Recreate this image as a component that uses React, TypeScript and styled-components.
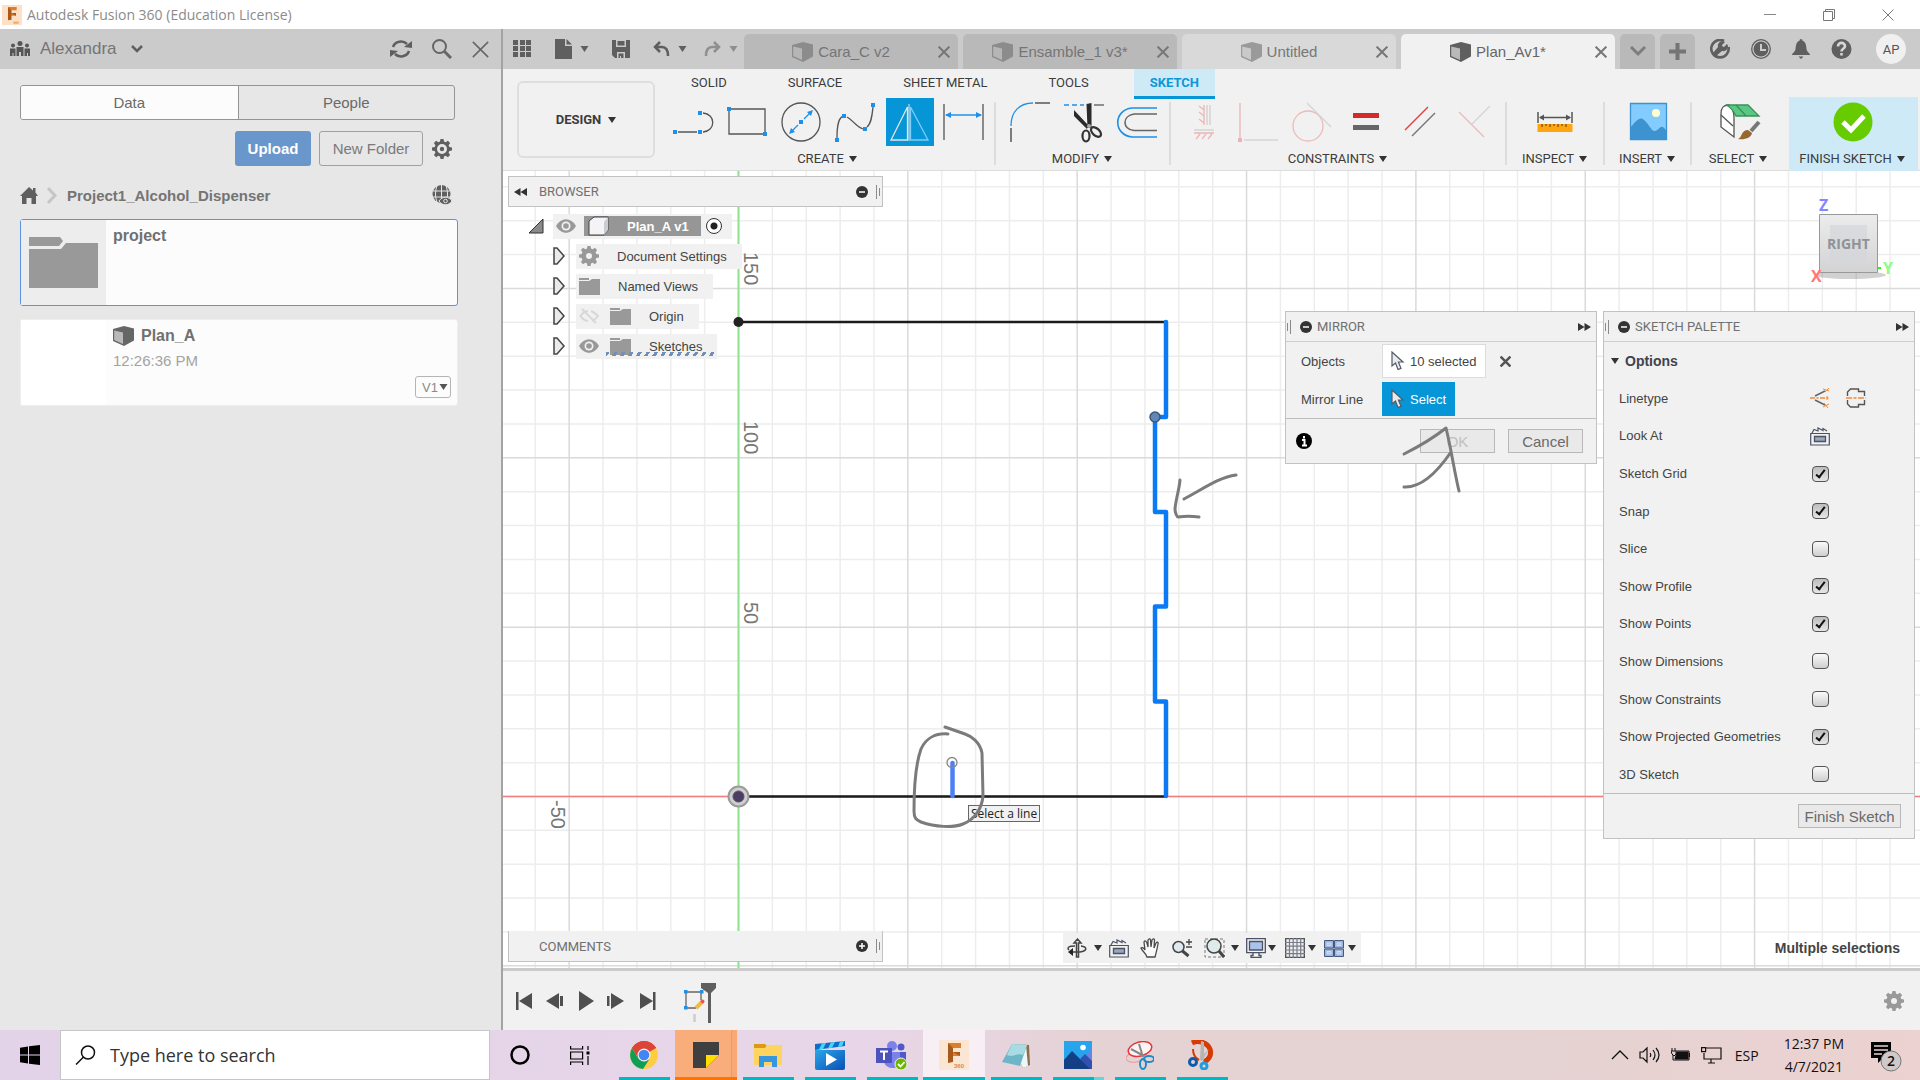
import React from "react";
import styled, { createGlobalStyle, css } from "styled-components";

const ui = `"Liberation Sans", Arial, sans-serif`;
const caps = `Roboto, "Liberation Sans", sans-serif`;
const sys = `"Open Sans", "Noto Sans", sans-serif`;

const Global = createGlobalStyle`
  *, *::before, *::after { box-sizing: border-box; }
  body { margin: 0; background: #fff; }
  button, input, select { font: inherit; color: inherit; }
  button { border: 0; background: none; padding: 0; cursor: pointer; }
  svg { display: block; flex: none; }
`;

/* ---------- frame ---------- */

const Screen = styled.div`
  display: flex;
  flex-direction: column;
  height: 100vh;
  overflow: hidden;
  font-family: ${ui};
  color: #4a4a4a;
`;
const TitleBar = styled.header`
  flex: none;
  height: 29px;
  display: flex;
  align-items: center;
  gap: 5px;
  padding: 0 3px 0 2px;
  font: 14px/20px ${sys};
  color: #8b8b8b;
`;
const WindowButtons = styled.div`
  margin-left: auto;
  display: flex;
  button { width: 59px; height: 29px; display: grid; place-items: center; }
`;
const Body = styled.div`
  flex: 1;
  min-height: 0;
  display: flex;
`;

/* ---------- data panel ---------- */

const DataPanel = styled.aside`
  flex: none;
  width: 503px;
  background: #e7e7e7;
  border-right: 2px solid #a3a3a3;
  color: #6a6a6a;
  font-size: 15px;
`;
const PanelTop = styled.div`
  height: 40px;
  background: #cbcbcb;
  display: flex;
  align-items: center;
  padding: 0 12px 0 10px;
  gap: 20px;
`;
const TeamButton = styled.button`
  display: flex;
  align-items: center;
  gap: 10px;
  margin-right: auto;
  font-size: 17px;
  color: #757575;
  span { margin-right: 4px; }
`;
const PanelContent = styled.div`
  padding: 16px 43px 0 20px;
`;
const Segments = styled.div`
  display: grid;
  grid-template-columns: 1fr 1fr;
  border: 1px solid #949494;
  border-radius: 3px;
  margin-right: 3px;
  overflow: hidden;
`;
const Segment = styled.button<{ $on?: boolean }>`
  height: 33px;
  background: ${(p) => (p.$on ? "#fcfcfc" : "transparent")};
  & + & { border-left: 1px solid #949494; }
`;
const Actions = styled.div`
  display: flex;
  justify-content: flex-end;
  align-items: center;
  gap: 8px;
  margin: 11px 6px 0 0;
`;
const UploadButton = styled.button`
  width: 76px;
  height: 35px;
  border-radius: 3px;
  background: #6996cb;
  color: #fff;
  font-weight: 700;
`;
const FolderButton = styled.button`
  width: 104px;
  height: 35px;
  margin-right: 1px;
  border: 1px solid #a0a0a0;
  border-radius: 3px;
  color: #7a7a7a;
`;
const Crumbs = styled.nav`
  display: flex;
  align-items: center;
  gap: 9px;
  height: 48px;
  margin-top: 5px;
  padding-right: 6px;
  a { color: #747474; font-weight: 700; text-decoration: none; }
  button { margin-left: auto; }
`;
const Card = styled.article<{ $selected?: boolean }>`
  display: flex;
  height: 87px;
  margin-bottom: 13px;
  background: #fcfcfc;
  border: 1px solid ${(p) => (p.$selected ? "#5b93dc" : "#eee")};
  border-radius: 3px;
`;
const Thumb = styled.div<{ $folder?: boolean }>`
  width: 85px;
  display: grid;
  place-items: center;
  background: ${(p) => (p.$folder ? "#ededed" : "#fff")};
`;
const CardText = styled.div`
  flex: 1;
  display: flex;
  flex-direction: column;
  padding: 6px 6px 0 7px;
  h3 {
    margin: 0;
    display: flex;
    align-items: center;
    gap: 7px;
    font-size: 16px;
    line-height: 20px;
    color: #707070;
  }
  time { line-height: 30px; color: #a3a3a3; }
`;
const Version = styled.label`
  align-self: flex-end;
  display: grid;
  width: 36px;
  height: 22px;
  align-items: center;
  border: 1px solid #b5b5b5;
  border-radius: 3px;
  font-size: 13px;
  color: #8a8a8a;
  > * { grid-area: 1 / 1; }
  select { appearance: none; border: 0; background: none; padding: 0 0 0 6px; width: 100%; }
  svg { justify-self: end; margin-right: 2px; }
`;

/* ---------- document tabs ---------- */

const Workspace = styled.main`
  flex: 1;
  min-width: 0;
  display: flex;
  flex-direction: column;
`;
const DocBar = styled.div`
  flex: none;
  height: 40px;
  display: flex;
  align-items: flex-end;
  background: #cbcbcb;
`;
const QuickTools = styled.div`
  flex: none;
  width: 241px;
  height: 40px;
  display: flex;
  align-items: center;
  gap: 23px;
  padding-left: 10px;
  button { display: flex; align-items: center; gap: 8px; }
  button:last-child { margin-left: -6px; }
`;
const Tabs = styled.div`
  flex: 1;
  display: flex;
  gap: 5px;
`;
const Tab = styled.div<{ $tone: string; $ink: string }>`
  flex: 0 1 214px;
  height: 35px;
  display: flex;
  align-items: center;
  padding-right: 8px;
  background: ${(p) => p.$tone};
  color: ${(p) => p.$ink};
  border-radius: 5px 5px 0 0;
  font-size: 15px;
  > button:first-child {
    flex: 1;
    display: flex;
    align-items: center;
    justify-content: center;
    gap: 5px;
  }
`;
const TabTool = styled.button`
  width: 35px;
  height: 35px;
  border-radius: 5px 5px 0 0;
  background: #b9b9b9;
  display: grid;
  place-items: center;
`;
const Account = styled.div`
  flex: none;
  height: 40px;
  display: flex;
  align-items: center;
  gap: 21px;
  padding-right: 14px;
`;
const Avatar = styled.button`
  width: 30px;
  height: 30px;
  margin-left: 3px;
  border-radius: 50%;
  background: #f0f0f0;
  font: 13px ${caps};
  color: #555;
`;

/* ---------- ribbon ---------- */

const Ribbon = styled.div`
  flex: none;
  display: flex;
  height: 102px;
  padding-right: 2px;
  background: #f1f1f1;
  border-bottom: 1px solid #dcdcdc;
  font-family: ${caps};
  font-size: 13px;
  color: #3c3c3c;
`;
const DesignButton = styled.button`
  flex: none;
  width: 138px;
  height: 77px;
  margin: 12px 12px 0 14px;
  border: 2px solid #dedede;
  border-radius: 6px;
  display: flex;
  align-items: center;
  justify-content: center;
  gap: 7px;
  font-weight: 700;
`;
const RibbonMain = styled.div`
  flex: 1;
  display: flex;
  flex-direction: column;
`;
const RibbonTabs = styled.div`
  height: 28px;
  display: flex;
  gap: 29px;
  padding-left: 8px;
`;
const RibbonTab = styled.button<{ $on?: boolean }>`
  height: 30px;
  padding: 0 16px 3px;
  ${(p) =>
    p.$on &&
    css`
      background: #cdeaf6;
      border-bottom: 3px solid #0696d7;
      padding-bottom: 0;
      color: #0e97d8;
      font-weight: 700;
    `}
`;
const Groups = styled.div`
  flex: 1;
  display: flex;
`;
const Group = styled.section<{ $w: number; $pad?: number; $finish?: boolean; $last?: boolean }>`
  position: relative;
  flex: none;
  width: ${(p) => p.$w}px;
  padding: 1px ${(p) => p.$pad || 0}px 0 0;
  display: flex;
  flex-direction: column;
  align-items: center;
  background: ${(p) => (p.$finish ? "#cdeaf6" : "none")};
  margin-left: ${(p) => (p.$finish ? "auto" : "0")};
  &::after {
    content: "";
    position: absolute;
    right: 0;
    top: 5px;
    height: 63px;
    width: ${(p) => (p.$last ? "0" : "2px")};
    background: #dcdcdc;
  }
`;
const Tools = styled.div`
  display: flex;
  gap: 6px;
`;
const Tool = styled.button<{ $on?: boolean }>`
  width: 48px;
  height: 48px;
  background: ${(p) => (p.$on ? "#0696d7" : "none")};
`;
const GroupLabel = styled.button`
  height: 25px;
  display: flex;
  align-items: center;
  gap: 5px;
  padding-right: 3px;
  white-space: nowrap;
`;

/* ---------- canvas ---------- */

const Canvas = styled.div`
  position: relative;
  flex: 1;
  min-height: 0;
  overflow: hidden;
  background: #fff;
  font-size: 13px;
`;
const Layer = styled.svg`
  position: absolute;
  inset: 0;
  width: 100%;
  height: 100%;
  pointer-events: none;
`;
const PanelBar = styled.div<{ $bottom?: boolean }>`
  position: absolute;
  left: 5px;
  width: 375px;
  height: 31px;
  display: flex;
  align-items: center;
  padding: 0 2px 0 5px;
  background: #f1f1f1;
  border: 1px solid #c2c2c2;
  ${(p) => (p.$bottom ? "bottom: 6px; border-top: 0;" : "top: 5px;")}
  font: 13px ${caps};
  color: #707070;
  h2 { margin: 0 auto 0 0; font: inherit; }
  button { margin-right: 8px; }
`;
const Collapse = styled.span`
  width: 25px;
`;
const Tree = styled.ul`
  position: absolute;
  left: 26px;
  top: 40px;
  margin: 0;
  padding: 0;
  list-style: none;
  li { display: flex; align-items: center; height: 30px; }
`;
const Twisty = styled.button<{ $root?: boolean }>`
  width: ${(p) => (p.$root ? "24px" : "23px")};
  margin-left: ${(p) => (p.$root ? "0" : "24px")};
`;
const NodeBox = styled.div<{ $root?: boolean }>`
  position: relative;
  height: 25px;
  display: flex;
  align-items: center;
  gap: 11px;
  padding: 0 ${(p) => (p.$root ? "10px" : "15px")} 0 3px;
  background: #f1f1f1;
`;
const NodeName = styled.span`
  padding-left: 7px;
  color: #444;
`;
const RootName = styled.div`
  display: flex;
  align-items: center;
  gap: 18px;
  height: 20px;
  margin: 0 -6px 0 -3px;
  padding: 0 12px 0 4px;
  background: #969696;
  color: #fff;
  font-weight: 700;
`;
const ActiveRadio = styled.input`
  appearance: none;
  width: 16px;
  height: 16px;
  margin: 0;
  border: 1px solid #333;
  border-radius: 50%;
  background: radial-gradient(circle, #222 0 3px, #fff 4px);
`;
const Hatch = styled.i`
  position: absolute;
  left: 30px;
  right: 2px;
  bottom: 3px;
  height: 4px;
  background: repeating-linear-gradient(120deg, #6f8fb8 0 3px, transparent 3px 7px);
`;
const Dialog = styled.section<{ $right: number }>`
  position: absolute;
  top: 140px;
  right: ${(p) => p.$right}px;
  width: 312px;
  background: #f1f1f1;
  border: 1px solid #c2c2c2;
  color: #444;
`;
const DialogHead = styled.header`
  height: 30px;
  display: flex;
  align-items: center;
  gap: 5px;
  padding: 0 5px 0 1px;
  border-bottom: 1px solid #cfcfcf;
  font: 13px ${caps};
  color: #707070;
  h2 { margin: 0 auto 0 0; font: inherit; }
  button:first-of-type { margin-left: 4px; }
`;
const Inputs = styled.div`
  display: grid;
  grid-template-columns: 81px auto 40px;
  justify-content: start;
  align-items: center;
  row-gap: 4px;
  padding: 2px 0 2px 15px;
`;
const Picker = styled.button<{ $on?: boolean }>`
  justify-self: start;
  height: 34px;
  display: flex;
  align-items: center;
  gap: 5px;
  padding: 0 8px;
  border: 1px solid ${(p) => (p.$on ? "#0696d7" : "#dcdcdc")};
  background: ${(p) => (p.$on ? "#0696d7" : "#fff")};
  color: ${(p) => (p.$on ? "#fff" : "#444")};
`;
const Clear = styled.button`
  justify-self: center;
`;
const DialogFoot = styled.footer`
  height: 45px;
  display: flex;
  align-items: center;
  justify-content: flex-end;
  gap: 13px;
  padding: 0 13px 0 10px;
  border-top: 1px solid #bdbdbd;
  > svg { margin-right: auto; }
`;
const FlatButton = styled.button<{ $w: number }>`
  width: ${(p) => p.$w}px;
  height: 24px;
  border: 1px solid #b8b8b8;
  background: #e9e9e9;
  font-size: 15px;
  color: #6a6a6a;
  &:disabled { color: #c0c0c0; }
`;
const Options = styled.div`
  display: grid;
  grid-auto-rows: 1fr;
  height: 451px;
`;
const OptionsHead = styled.button`
  display: flex;
  align-items: center;
  gap: 5px;
  padding-left: 6px;
  font-size: 14px;
  font-weight: 700;
  color: #3f434d;
`;
const OptionRow = styled.label`
  display: grid;
  grid-template-columns: 175px auto auto;
  justify-content: start;
  align-items: center;
  column-gap: 16px;
  padding-left: 15px;
  span { white-space: nowrap; }
`;
const Check = styled.input`
  appearance: none;
  position: relative;
  width: 17px;
  height: 16px;
  margin: 0 0 0 2px;
  border: 1px solid #555;
  border-radius: 4px;
  background: linear-gradient(#fafafa, #cfcfcf);
  &:checked { background: linear-gradient(#bdbdbd, #e6e6e6); }
  &:checked::after {
    content: "";
    position: absolute;
    left: 5px;
    top: 1px;
    width: 5px;
    height: 10px;
    border: solid #111;
    border-width: 0 2px 2px 0;
    transform: rotate(38deg);
  }
`;
const ViewNav = styled.div`
  position: absolute;
  left: 50%;
  bottom: 5px;
  transform: translateX(-50%);
  height: 30px;
  display: flex;
  align-items: center;
  padding: 0 5px 0 4px;
  background: #f1f1f1;
`;
const NavGap = styled.i<{ $w: number }>`
  width: ${(p) => p.$w}px;
`;
const Status = styled.p`
  position: absolute;
  right: 20px;
  bottom: 10px;
  margin: 0;
  font-size: 14px;
  line-height: 20px;
  font-weight: 700;
  color: #444;
`;
const Cube = styled.svg`
  position: absolute;
  right: 23px;
  top: 20px;
`;
const Hint = styled.div`
  position: absolute;
  left: 465px;
  top: 634px;
  height: 17px;
  padding: 0 2px;
  border: 1px solid #666;
  background: #f1f1f1;
  font: 12px/15px ${sys};
  color: #222;
`;
const Timeline = styled.footer`
  flex: none;
  height: 62px;
  display: flex;
  align-items: center;
  border-top: 3px solid #cbcbcb;
  background: #f1f1f1;
  padding: 0 16px 0 12px;
  gap: 12px;
  button:last-child { margin-left: auto; }
`;
const Feature = styled.button`
  margin: 5px 0 0 14px;
`;

/* ---------- taskbar ---------- */

const Taskbar = styled.nav`
  flex: none;
  height: 50px;
  display: flex;
  background: linear-gradient(90deg, #e2d3e8 0%, #e8d6e8 45%, #e5d2d4 58%, #e5d2d2 80%, #ecd2d1 100%);
  font-family: ${sys};
  color: #111;
`;
const Start = styled.button`
  width: 60px;
  display: grid;
  place-items: center;
`;
const Search = styled.label`
  width: 430px;
  display: flex;
  align-items: center;
  gap: 14px;
  padding-left: 14px;
  background: #fff;
  border: 1px solid #c6c6ca;
  input { flex: 1; min-width: 0; border: 0; outline: 0; background: none; padding: 0; font-size: 18px; }
  input::placeholder { color: #333; opacity: 1; }
`;
const TaskItem = styled.button<{ $w?: number; $tone?: string; $line?: string; $full?: boolean; $first?: boolean }>`
  position: relative;
  width: ${(p) => p.$w || 62}px;
  margin-left: ${(p) => (p.$first ? 3 : 0)}px;
  display: grid;
  place-items: center;
  background: ${(p) => p.$tone || "none"};
  &::after {
    content: "";
    position: absolute;
    bottom: 0;
    left: ${(p) => (p.$full ? 0 : 6)}px;
    right: ${(p) => (p.$full ? 0 : 5)}px;
    height: 3px;
    background: ${(p) => p.$line || "none"};
  }
`;
const Tray = styled.div`
  margin-left: auto;
  display: flex;
  align-items: center;
  gap: 10px;
  padding-right: 18px;
  font-size: 14px;
`;
const Lang = styled.button`
  margin: 0 15px 0 3px;
`;
const Clock = styled.button`
  line-height: 23px;
  text-align: center;
  margin-right: 16px;
`;

/* ---------- icons ---------- */

const Caret = ({ c = "#333", w = 8 }: { c?: string; w?: number }) => (
  <svg width={w} height={6} viewBox="0 0 8 6"><path d="M0 0h8L4 6z" fill={c} /></svg>
);
const gearPath =
  "M8.5 0h3l.5 2.6 1.7.7L15.9 1.8l2.2 2.2-1.5 2.2.7 1.7 2.7.6v3l-2.7.6-.7 1.7 1.5 2.2-2.2 2.2-2.2-1.5-1.7.7-.5 2.6h-3l-.5-2.6-1.7-.7-2.2 1.5-2.2-2.2 1.5-2.2-.7-1.7L0 11.5v-3l2.7-.6.7-1.7L1.9 4l2.2-2.2 2.2 1.5 1.7-.7z";
const Gear = ({ c = "#5f5f5f", hole = 5, dot = false }: { c?: string; hole?: number; dot?: boolean }) => (
  <svg width={20} height={20} viewBox="0 0 20 20">
    <path fillRule="evenodd" fill={c} d={`${gearPath}M10 ${10 - hole}a${hole} ${hole} 0 1 0 0 ${hole * 2}a${hole} ${hole} 0 1 0 0 ${-hole * 2}z`} />
    {dot && <circle cx={10} cy={10} r={2.2} fill={c} />}
  </svg>
);
const Box = ({ dark = "#666", light = "#b9b9b9" }: { dark?: string; light?: string }) => (
  <svg width={21} height={20} viewBox="0 0 21 20">
    <path d="M0 3 11 0l10 2.5v12L11 20 0 15z" fill={dark} />
    <path d="M1.2 4.6 10 6.5V18l-8.800-4z" fill={light} />
  </svg>
);
const Eye = () => (
  <svg width={20} height={14} viewBox="0 0 20 14">
    <path d="M0 7C5-2 15-2 20 7 15 16 5 16 0 7z" fill="#999" />
    <circle cx={10} cy={7} r={4.5} fill="#f1f1f1" /><circle cx={10} cy={7} r={2.8} fill="#999" />
  </svg>
);
const EyeOff = () => (
  <svg width={20} height={16} viewBox="0 0 20 16" fill="none" stroke="#d8d8d8" strokeWidth={2}>
    <path d="M1 9C4 4 7 3 9 3M12 3c3 1 5 3 7 5-2 3-4 4-6 5M2 9c2 2 4 4 7 4M3 1l14 14" />
  </svg>
);
const Folder = () => (
  <svg width={21} height={17} viewBox="0 0 21 17" fill="#999">
    <path d="M0 0h10v2H0zM0 3h10l3-2h8v16H0z" />
  </svg>
);
const X = ({ s = 11, c = "#777", w = 2 }: { s?: number; c?: string; w?: number }) => (
  <svg width={s} height={s} viewBox="0 0 10 10"><path d="M.5.5l9 9M9.5.5l-9 9" stroke={c} strokeWidth={(w * 10) / s} fill="none" /></svg>
);
const Round = ({ plus = false }: { plus?: boolean }) => (
  <svg width={12} height={12} viewBox="0 0 12 12">
    <circle cx={6} cy={6} r={6} fill="#333" /><path d={plus ? "M3 6h6M6 3v6" : "M3 6h6"} stroke="#fff" strokeWidth={1.5} />
  </svg>
);
const Grip = ({ flip = false }: { flip?: boolean }) => (
  <svg width={4} height={14} viewBox="0 0 4 14" stroke="#8a8a8a">
    {flip ? <path d="M.5 3v8M3.5 0v14" /> : <path d="M.5 0v14M3.5 3v8" />}
  </svg>
);
const Doubles = ({ left = false }: { left?: boolean }) => (
  <svg width={13} height={8} viewBox="0 0 13 8" fill="#333"><path d={left ? "M6.5 0v8L0 4zM13 0v8L6.5 4z" : "M0 0v8l6.5-4zM6.5 0v8L13 4z"} /></svg>
);
const Pointer = () => (
  <svg width={14} height={20} viewBox="0 0 14 20">
    <path d="M1 1v14l3.5-3 2.5 6.5 3-1.2-2.6-6.3H12z" fill="#e8eaee" stroke="#555b66" strokeWidth={1.2} />
  </svg>
);
const LookAt = () => (
  <svg width={20} height={20} viewBox="0 0 20 20" fill="none" stroke="#4a5263" strokeWidth={1.3}>
    <path d="M.7 7.5h18.6V19H.7zM2 7l2-3.500 4 1.500V2l5 2.500V2.500L17 5" strokeWidth={1.2} /><path d="M4.5 10.5h11v5h-11z" fill="#9aa6ba" />
  </svg>
);
const s48 = { width: 48, height: 48, viewBox: "0 0 48 48", fill: "none", strokeWidth: 1.3 };
const blue = "#1e90e8";
const Sq = ({ x, y }: { x: number; y: number }) => <rect x={x - 2} y={y - 2} width={4} height={4} fill={blue} stroke="none" />;

const LineTool = () => (
  <svg {...s48} stroke="#555"><path d="M8 34h19M33 34c13-1 13-18 0-19" /><Sq x={5} y={34} /><Sq x={30} y={34} /><Sq x={30} y={15} /></svg>
);
const RectTool = () => (
  <svg {...s48} stroke="#555"><path d="M5 11h36v25H5z" /><Sq x={5} y={11} /><Sq x={41} y={36} /></svg>
);
const CircleTool = () => (
  <svg {...s48} stroke="#555"><circle cx={23} cy={24} r={19} /><path d="M14 33l6-6M26 21l6-6" stroke={blue} /><path d="M11 36l2-6 4 4zM35 12l-2 6-4-4z" fill={blue} stroke="none" /><Sq x={23} y={24} /></svg>
);
const SplineTool = () => (
  <svg {...s48} stroke="#555"><path d="M5 40c0-15 2-20 6-22M15 19c6 3 8 9 16 12M35 29c4-3 5-10 6-20" /><Sq x={5} y={42} /><Sq x={12} y={18} /><Sq x={33} y={31} /><Sq x={41} y={7} /></svg>
);
const MirrorTool = () => (
  <svg {...s48}><path d="M21.5 9v33H5z" stroke="#e4e4e4" /><path d="M24.500 9v33H42z" stroke="#7fcdf5" /><path d="M23 6v37" stroke="#e4e4e4" strokeWidth={1} /></svg>
);
const DimTool = () => (
  <svg {...s48} stroke="#555"><path d="M4 6v36M43 6v36" /><path d="M6 17h35" stroke={blue} /><path d="M5 17l6-3v6zM42 17l-6-3v6z" fill={blue} stroke="none" /></svg>
);
const FilletTool = () => (
  <svg {...s48}><path d="M5 28C5 13 14 5 27 5" stroke={blue} /><path d="M5 30v14M29 5h15" stroke="#555" strokeWidth={1.5} /></svg>
);
const TrimTool = () => (
  <svg {...s48}>
    <path d="M4 7h20" stroke={blue} strokeDasharray="5 3" strokeWidth={1.6} /><path d="M34 7h10" stroke="#777" strokeWidth={1.6} />
    <path d="M26.500 6l5-1v25h-4zM14 12l14 15-1 4-13-13z" fill="#2b2b2b" />
    <ellipse cx={26} cy={38} rx={3.5} ry={5.5} stroke="#333" strokeWidth={2.2} /><ellipse cx={36} cy={34} rx={3.5} ry={6} transform="rotate(-48 36 34)" stroke="#333" strokeWidth={2.2} /><circle cx={29} cy={28} r={2} fill="#aaa" />
  </svg>
);
const OffsetTool = () => (
  <svg {...s48}><path d="M43 10H18C-1 12-1 37 18 39h25" stroke={blue} strokeWidth={1.6} /><path d="M43 16H20c-12 2-12 15 0 16.5h23" stroke="#666" strokeWidth={1.6} /></svg>
);
const HVTool = () => (
  <svg {...s48}><path d="M30 7v20M27 7v20M14 32h20" stroke="#d4d4d4" strokeWidth={1.5} /><path d="M24 7v20M24 12l-5-4M24 18l-5-4M24 25l-5-4M14 35h20M16 41l4-5M22 41l4-5M28 41l4-5" stroke="#efb4b4" /></svg>
);
const CoincTool = () => (
  <svg {...s48}><path d="M6 5v35" stroke="#ecb5b5" /><path d="M10 42h34" stroke="#d4d4d4" strokeWidth={1.6} /><path d="M4 40h4v4H4z" fill="#ecb5b5" /></svg>
);
const TangentTool = () => (
  <svg {...s48}><circle cx={20} cy={28} r={15} stroke="#efb9b9" /><path d="M19 5l24 24" stroke="#d4d4d4" /></svg>
);
const EqualTool = () => (
  <svg {...s48}><path d="M11 15h26v5H11z" fill="#d42a2a" /><path d="M11 27h26v5H11z" fill="#666" /></svg>
);
const ParallelTool = () => (
  <svg {...s48}><path d="M9 32l23-23" stroke="#d44" strokeWidth={1.5} /><path d="M16 38l23-23" stroke="#777" strokeWidth={1.5} /></svg>
);
const PerpTool = () => (
  <svg {...s48}><path d="M9 14l25 25" stroke="#efb9b9" /><path d="M22 26l18-18" stroke="#d4d4d4" /></svg>
);
const InspectTool = () => (
  <svg {...s48}><path d="M6 14v11M40 14v11M8 19.5h30" stroke="#555" strokeWidth={1.5} /><path d="M7 19.5l5-3v6zM39 19.5l-5-3v6z" fill="#555" /><path d="M5.5 26h35v8h-35z" fill="#ffa512" /><path d="M10 26v3M14 26v2M18 26v3M22 26v2M26 26v3M30 26v2M34 26v3" stroke="#7a5414" /></svg>
);
const InsertTool = () => (
  <svg {...s48}><path d="M5.500 5.5h36v36h-36z" fill="#84ccff" stroke="#3a92cf" /><path d="M6 29c5-6 9-11 13-7 5 4 8 12 11 11 4-1 5-5 8-4l3 3v9H6z" fill="#3d93cf" /><circle cx={31} cy={15} r={4} fill="#ffffcd" /></svg>
);
const SelectTool = () => (
  <svg {...s48}><path d="M5 29V16C5 9 8 7 13 7c4 3 5 7 5 13v19z" fill="#fff" stroke="#555" /><path d="M5 17l12 11" stroke="#555" /><path d="M10 7h22l11 11H20c-2-4-5-9-10-11z" fill="#5ac882" stroke="#3c8f5b" /><path d="M20 7l10 11" stroke="#3c8f5b" /><path d="M22 41c4-1 3-9 10-9l4 3c-1 5-7 7-14 6z" fill="#96682f" /><path d="M35 33l8-9" stroke="#777" strokeWidth={4} /></svg>
);
const FinishTool = () => (
  <svg {...s48}><circle cx={23} cy={24} r={19.5} fill="#66cc00" /><path d="M13 24l8 8 13-14" stroke="#fff" strokeWidth={5} /></svg>
);

const FusionLogo = ({ s = 20, label = false }: { s?: number; label?: boolean }) => (
  <svg width={s} height={s} viewBox="0 0 30 30">
    <path d="M0 0h30v30H0z" fill={label ? "#fbe5d3" : "#fde0c6"} />
    <path d="M9 3h13v5h-8v4h7v4h-7v6H9z" fill="#d97f2e" /><path d="M9 3l5 5v14l-5 1zM14 12h7v4z" fill="#a85a1c" />
    {label ? <text x={15} y={28} fontSize={6} fontWeight={700} fill="#e08a45" fontFamily="Liberation Sans">360</text> : <path d="M17 25h8v3h-8z" fill="#f0a565" />}
  </svg>
);

/* ---------- sketch geometry ---------- */

const STEP = 33.87;
const AX = 235.5;
const AY = 625.5;
const range = (a: number, b: number) => Array.from({ length: b - a + 1 }, (_, i) => a + i);

const Sketch = () => (
  <Layer>
    {range(-6, 60).filter((i) => i % 5).map((i) => <path key={"v" + i} d={`M${AX + i * STEP} 0V3000`} stroke="#ededed" strokeWidth={1.5} />)}
    {range(-18, 40).filter((i) => i % 5).map((i) => <path key={"h" + i} d={`M0 ${AY + i * STEP}H5000`} stroke="#ededed" strokeWidth={1.5} />)}
    {range(-1, 12).map((i) => <path key={"V" + i} d={`M${AX + i * 5 * STEP} 0V3000`} stroke="#dadada" strokeWidth={1.5} />)}
    {range(-3, 8).map((i) => <path key={"H" + i} d={`M0 ${AY + i * 5 * STEP}H5000`} stroke="#dadada" strokeWidth={1.5} />)}
    <path d={`M0 ${AY}H5000`} stroke="#ef8080" strokeWidth={1.5} />
    <path d={`M${AX} 0V3000`} stroke="#8fe58f" strokeWidth={2} />
    <g fontSize={20} fontFamily="Liberation Sans" fill="#777">
      <text transform="translate(241 81) rotate(90)">150</text>
      <text transform="translate(241 250) rotate(90)">100</text>
      <text transform="translate(241 431) rotate(90)">50</text>
      <text transform="translate(48 629) rotate(90)">-50</text>
    </g>
    <path d="M235 151H663M235 625.5H663" stroke="#1c1c1c" strokeWidth={2.5} />
    <path d="M663 151V246H652V341H663V435.5H652V530.5H663V625" fill="none" stroke="#0a7bf5" strokeWidth={4.5} strokeLinejoin="round" strokeLinecap="round" />
    <circle cx={652} cy={246} r={5} fill="#5f87b8" stroke="#3c5878" strokeWidth={1.5} />
    <circle cx={235.5} cy={151} r={5} fill="#222" />
    <circle cx={235.5} cy={625.5} r={10} fill="#cfcfcf" stroke="#9b9b9b" strokeWidth={2} />
    <circle cx={235.5} cy={625.5} r={5.5} fill="#4b3d63" stroke="#555" />
    <path d="M449.5 592v33" stroke="#4d7ff5" strokeWidth={4.5} strokeLinecap="round" />
    <circle cx={449} cy={591.5} r={5} fill="none" stroke="#888" strokeWidth={1.3} />
  </Layer>
);
const Ink = () => (
  <Layer fill="none" stroke="#7b7b7b" strokeWidth={3} strokeLinecap="round" strokeLinejoin="round">
    <path d="M445 563C433 562 423 567 418 578C413 592 411 615 411 640C411 647 413 649 418 651C432 656 450 657 460 653C473 648 479 636 480 625L479 582C477 571 468 565 462 563L442 556" />
    <path d="M733 304c-16 2-30 12-52 24M677 309c-1 11-4 18-5 29 0 4 2 8 3 8 7-1 14-1 21 0" />
    <path d="M901 283c14-7 28-15 42-26 5 20 8 42 13 63M901 316c17 1 32-13 47-35" />
  </Layer>
);

/* ---------- data ---------- */

const docs = [
  { name: "Cara_C v2", tone: "#b9b9b9", ink: "#757575", dark: "#8c8c8c", light: "#b6b6b6" },
  { name: "Ensamble_1 v3*", tone: "#b9b9b9", ink: "#757575", dark: "#8c8c8c", light: "#b6b6b6" },
  { name: "Untitled", tone: "#d9d9d9", ink: "#777", dark: "#9a9a9a", light: "#c9c9c9" },
  { name: "Plan_Av1*", tone: "#f1f1f1", ink: "#666", dark: "#5f5f5f", light: "#b9b9b9" },
];
const checks: [string, boolean][] = [
  ["Sketch Grid", true], ["Snap", true], ["Slice", false], ["Show Profile", true], ["Show Points", true],
  ["Show Dimensions", false], ["Show Constraints", false], ["Show Projected Geometries", true], ["3D Sketch", false],
];
const teal = "#00b7c3";

type GroupProps = { label: string; tools: React.FC[]; on?: number; w: number; pad?: number; finish?: boolean; last?: boolean };
const ToolGroup = ({ label, tools, on, w, pad, finish, last }: GroupProps) => (
  <Group $w={w} $pad={pad} $finish={finish} $last={last}>
    <Tools>{tools.map((T, i) => <Tool key={i} $on={i === on} aria-label={label}><T /></Tool>)}</Tools>
    <GroupLabel>{label} <Caret /></GroupLabel>
  </Group>
);
const TreeRow = ({ name, eye, icon, hatch }: { name: string; eye?: React.ReactNode; icon: React.ReactNode; hatch?: boolean }) => (
  <li>
    <Twisty aria-label="Expand"><svg width={12} height={18} viewBox="0 0 12 18"><path d="M1 1h3l7 8-7 8H1z" fill="#e9eaec" stroke="#444" strokeWidth={1.5} /></svg></Twisty>
    <NodeBox>{eye}{icon}<NodeName>{name}</NodeName>{hatch && <Hatch />}</NodeBox>
  </li>
);
const Play = ({ d, w = 18 }: { d: string; w?: number }) => (
  <button aria-label="Timeline"><svg width={w} height={20} viewBox={`0 0 ${w} 20`} fill="#4f4f4f"><path d={d} /></svg></button>
);

export default function App() {
  return (
    <Screen>
      <Global />
      <TitleBar>
        <FusionLogo />
        <span>Autodesk Fusion 360 (Education License)</span>
        <WindowButtons>
          <button aria-label="Minimize"><svg width={12} height={12}><path d="M0 5.5h12" stroke="#888" /></svg></button>
          <button aria-label="Restore"><svg width={12} height={12} fill="none" stroke="#777"><path d="M.5 2.5h9v9h-9zM2.5 2.5v-2h9v9h-2" /></svg></button>
          <button aria-label="Close"><X s={12} w={1} /></button>
        </WindowButtons>
      </TitleBar>
      <Body>
        <DataPanel>
          <PanelTop>
            <TeamButton>
              <svg width={20} height={16} viewBox="0 0 20 16" fill="#555"><circle cx={10} cy={2.5} r={2.5} /><circle cx={3} cy={4.5} r={2} /><circle cx={17} cy={4.5} r={2} /><path d="M6.5 6h7v9H11v-4H9v4H6.500zM0 7.5h5.5V15h-2v-3h-1v3H0zM14.5 7.5H20V15h-2v-3h-1v3h-2.5z" /></svg>
              <span>Alexandra</span>
              <svg width={12} height={8} fill="none" stroke="#5f5f5f" strokeWidth={2.5}><path d="M1 1l5 5 5-5" /></svg>
            </TeamButton>
            <button aria-label="Refresh"><svg width={22} height={18} viewBox="0 0 22 18" fill="none" stroke="#5f5f5f" strokeWidth={2.5}><path d="M3 7C5 1 13 0 17 4M19 11c-2 6-10 7-14 3" /><path d="M14 7l8 1V1zM8 11l-8-1v7z" fill="#5f5f5f" stroke="none" /></svg></button>
            <button aria-label="Search"><svg width={20} height={20} fill="none" stroke="#666" strokeWidth={2}><circle cx={7.5} cy={7.5} r={6.5} /><path d="M12 12l7 7" strokeWidth={3} /></svg></button>
            <button aria-label="Close panel"><X s={17} w={1.5} c="#666" /></button>
          </PanelTop>
          <PanelContent>
            <Segments><Segment $on>Data</Segment><Segment>People</Segment></Segments>
            <Actions>
              <UploadButton>Upload</UploadButton>
              <FolderButton>New Folder</FolderButton>
              <button aria-label="Settings"><Gear dot /></button>
            </Actions>
            <Crumbs>
              <a href="#home" aria-label="Home"><svg width={18} height={17} viewBox="0 0 18 17" fill="#5f5f5f"><path d="M9 0l4 3.5V1h2.5v4.5L18 9h-2v8h-4.5v-6h-5v6H2V9H0z" /></svg></a>
              <svg width={11} height={17} fill="none" stroke="#c6c6c6" strokeWidth={3}><path d="M1 1l7 7.500-7 7.500" /></svg>
              <a href="#project">Project1_Alcohol_Dispenser</a>
              <button aria-label="Open on the web"><svg width={20} height={20} viewBox="0 0 20 20"><circle cx={9.5} cy={9} r={9} fill="#5f5f5f" /><path d="M9.5 0v18M1 6h17M1 12h17M5 1c-2 5-2 11 0 16M14 1c2 5 2 11 0 16" stroke="#e7e7e7" fill="none" /><path d="M7 16c3-5 10-5 13 0-3 5-10 5-13 0z" fill="#5f5f5f" stroke="#e7e7e7" /><circle cx={13.5} cy={16} r={1.8} stroke="#e7e7e7" fill="#5f5f5f" /></svg></button>
            </Crumbs>
            <Card $selected>
              <Thumb $folder><svg width={69} height={51} viewBox="0 0 69 51" fill="#999"><path d="M0 0h31l3 4-4 5H0zM0 12h32l5-6h32v45H0z" /></svg></Thumb>
              <CardText><h3>project</h3></CardText>
            </Card>
            <Card>
              <Thumb />
              <CardText>
                <h3><Box />Plan_A</h3>
                <time>12:26:36 PM</time>
                <Version><select aria-label="Version"><option>V1</option></select><Caret c="#555" w={9} /></Version>
              </CardText>
            </Card>
          </PanelContent>
        </DataPanel>

        <Workspace>
          <DocBar>
            <QuickTools>
              <button aria-label="Data panel"><svg width={19} height={18} fill="#5f5f5f">{[0, 7, 13].map((x) => [0, 6, 12].map((y) => <rect key={x + "-" + y} x={x} y={y} width={5} height={5} />))}</svg></button>
              <button aria-label="File"><svg width={17} height={20} fill="#5f5f5f"><path d="M0 0h10v7h7v13H0zM11.5 0L17 5.5h-5.5z" /></svg><Caret c="#5f5f5f" w={9} /></button>
              <button aria-label="Save"><svg width={18} height={18} viewBox="0 0 18 18"><path d="M0 0h18v18H3l-3-3z" fill="#5f5f5f" /><path d="M4 0h10v7H4zM5 18v-6h8v6z" fill="#cbcbcb" /><path d="M5.5 1h7v4.5h-7zM6.5 13.5h5V18H9v-2H8v2H6.5z" fill="#5f5f5f" /></svg></button>
              <button aria-label="Undo"><svg width={17} height={17} fill="none" stroke="#5f5f5f" strokeWidth={2.5}><path d="M7 1L2 6l5 5M2 6h7c4 0 6 3 6 9" /></svg><Caret c="#5f5f5f" w={9} /></button>
              <button aria-label="Redo"><svg width={17} height={17} fill="none" stroke="#8f8f8f" strokeWidth={2.5}><path d="M10 1l5 5-5 5M15 6H8c-4 0-6 3-6 9" /></svg><Caret c="#8f8f8f" w={9} /></button>
            </QuickTools>
            <Tabs>
              {docs.map((d) => (
                <Tab key={d.name} $tone={d.tone} $ink={d.ink}>
                  <button><Box dark={d.dark} light={d.light} />{d.name}</button>
                  <button aria-label={"Close " + d.name}><X s={12} c="#777" /></button>
                </Tab>
              ))}
              <TabTool aria-label="More tabs"><svg width={16} height={11} fill="none" stroke="#7d7d7d" strokeWidth={3}><path d="M1 1l7 7 7-7" /></svg></TabTool>
              <TabTool aria-label="New tab"><svg width={17} height={17}><path d="M0 8.5h17M8.5 0v17" stroke="#757575" strokeWidth={4} /></svg></TabTool>
            </Tabs>
            <Account>
              <button aria-label="Extensions"><svg width={20} height={20} viewBox="0 0 20 20"><path d="M14 2A8.700 8.700 0 1 0 18.500 8" fill="none" stroke="#5f5f5f" strokeWidth={2.6} /><path d="M15 3l-3 3 .5 1.500L14 8l3-3c3 4-1 8-5 7l-6 5-3-3 5-6c-1-4 3-7 7-5z" fill="#5f5f5f" /></svg></button>
              <button aria-label="Job status"><svg width={20} height={20} viewBox="0 0 20 20" fill="none"><circle cx={10} cy={10} r={9.3} stroke="#5f5f5f" strokeWidth={1.3} /><circle cx={10} cy={10} r={7.5} fill="#5f5f5f" /><path d="M10 5v6h5" stroke="#cbcbcb" strokeWidth={2} /></svg></button>
              <button aria-label="Notifications"><svg width={18} height={20} viewBox="0 0 18 20" fill="#5f5f5f"><path d="M9 0c1 0 1.500 1 1.500 1.700C14 3 14 6 14.5 10c.3 3 3.5 4 3.5 6H0c0-2 3.200-3 3.5-6C4 6 4 3 7.5 1.700 7.5 1 8 0 9 0zM6.500 17.500h5L9 20z" /></svg></button>
              <button aria-label="Help"><svg width={21} height={20} viewBox="0 0 20 20"><circle cx={10} cy={10} r={10} fill="#5f5f5f" /><path d="M6.5 7.500c0-5 7-4.500 7-.5 0 3-3.500 2.500-3.500 5.500M10 14v2.500" fill="none" stroke="#d6d6d6" strokeWidth={2.6} /></svg></button>
              <Avatar>AP</Avatar>
            </Account>
          </DocBar>

          <Ribbon>
            <DesignButton>DESIGN <Caret /></DesignButton>
            <RibbonMain>
              <RibbonTabs>
                {["SOLID", "SURFACE", "SHEET METAL", "TOOLS"].map((t) => <RibbonTab key={t}>{t}</RibbonTab>)}
                <RibbonTab $on>SKETCH</RibbonTab>
              </RibbonTabs>
              <Groups>
                <ToolGroup label="CREATE" tools={[LineTool, RectTool, CircleTool, SplineTool, MirrorTool, DimTool]} on={4} w={329} pad={6} />
                <ToolGroup label="MODIFY" tools={[FilletTool, TrimTool, OffsetTool]} w={175} />
                <ToolGroup label="CONSTRAINTS" tools={[HVTool, CoincTool, TangentTool, EqualTool, ParallelTool, PerpTool]} w={336} />
                <ToolGroup label="INSPECT" tools={[InspectTool]} w={98} />
                <ToolGroup label="INSERT" tools={[InsertTool]} w={87} />
                <ToolGroup label="SELECT" tools={[SelectTool]} w={95} last />
                <ToolGroup label="FINISH SKETCH" tools={[FinishTool]} w={129} finish last />
              </Groups>
            </RibbonMain>
          </Ribbon>

          <Canvas>
            <Sketch />
            <PanelBar>
              <Collapse><Doubles left /></Collapse>
              <h2>BROWSER</h2>
              <button aria-label="Minimize browser"><Round /></button>
              <Grip />
            </PanelBar>
            <Tree>
              <li>
                <Twisty $root aria-label="Collapse"><svg width={15} height={15}><path d="M0 14L14 0v14z" fill="#8a8a8a" stroke="#333" /></svg></Twisty>
                <NodeBox $root>
                  <Eye />
                  <RootName>
                    <svg width={21} height={20} viewBox="0 0 21 20"><path d="M1 5l5-4h14v13l-4 5H1z" fill="#f4f4f6" stroke="#444" /><path d="M16 6l4-5v13l-4 5z" fill="#c9ccd2" /></svg>
                    Plan_A v1
                  </RootName>
                  <ActiveRadio type="radio" name="active" defaultChecked aria-label="Activate Plan_A v1" />
                </NodeBox>
              </li>
              <TreeRow name="Document Settings" icon={<Gear c="#999" hole={3} />} />
              <TreeRow name="Named Views" icon={<Folder />} />
              <TreeRow name="Origin" eye={<EyeOff />} icon={<Folder />} />
              <TreeRow name="Sketches" eye={<Eye />} icon={<Folder />} hatch />
            </Tree>
            <PanelBar $bottom>
              <Collapse />
              <h2>COMMENTS</h2>
              <button aria-label="Expand comments"><Round plus /></button>
              <Grip />
            </PanelBar>

            <Cube width={96} height={100} viewBox="0 0 96 100">
              <defs><linearGradient id="face" x2="0" y2="1"><stop stopColor="#ececec" /><stop offset="1" stopColor="#d3d3d3" /></linearGradient></defs>
              <ellipse cx={49} cy={84} rx={36} ry={4} fill="#000" opacity={0.18} />
              <path d="M18.5 23.5h58v58h-58z" fill="url(#face)" stroke="#999" /><path d="M29 34h37v37H29z" fill="#d3d6da" opacity={0.7} />
              <g fontFamily="Open Sans" fontWeight={700}>
                <text x={47.5} y={58} textAnchor="middle" fontSize={14} fill="#8f9296">RIGHT</text>
                <text x={18} y={20} fontSize={16} fill="#8585ff">Z</text><text x={10} y={91} fontSize={16} fill="#f77">X</text><text x={82} y={83} fontSize={16} fill="#8f8">Y</text>
              </g>
              <path d="M77 77h3" stroke="#3e3" strokeWidth={2} />
            </Cube>

            <Dialog $right={323}>
              <DialogHead>
                <Grip flip /><button aria-label="Collapse mirror"><Round /></button><h2>MIRROR</h2><button aria-label="Dock mirror"><Doubles /></button>
              </DialogHead>
              <Inputs>
                <span>Objects</span>
                <Picker><Pointer />10 selected</Picker>
                <Clear aria-label="Clear selection"><X s={11} c="#555" w={2.5} /></Clear>
                <span>Mirror Line</span>
                <Picker $on><Pointer />Select</Picker>
              </Inputs>
              <DialogFoot>
                <svg width={16} height={16}><circle cx={8} cy={8} r={8} fill="#000" /><path d="M8 3v2.5M6 7h2.5v5M6 12.5h5" stroke="#fff" strokeWidth={2} fill="none" /></svg>
                <FlatButton $w={75} disabled>OK</FlatButton>
                <FlatButton $w={75}>Cancel</FlatButton>
              </DialogFoot>
            </Dialog>

            <Dialog $right={5}>
              <DialogHead>
                <Grip flip /><button aria-label="Collapse palette"><Round /></button><h2>SKETCH PALETTE</h2><button aria-label="Dock palette"><Doubles /></button>
              </DialogHead>
              <Options>
                <OptionsHead><Caret w={10} />Options</OptionsHead>
                <OptionRow as="div">
                  <span>Linetype</span>
                  <button aria-label="Construction"><svg width={20} height={20} fill="none" stroke="#666" strokeWidth={1.5}><path d="M5 8l10-5M5 12l10 5" /><path d="M0 10h20" stroke="#f08a3c" strokeDasharray="5 1.5 2 1.5" /><path d="M13 1l6 2M19 0l-4 4M13 19l6-3M14 15l4 5M17 8v4" stroke="#f08a3c" strokeWidth={1} /></svg></button>
                  <button aria-label="Centerline"><svg width={20} height={20} fill="none" stroke="#555" strokeWidth={1.4}><path d="M1.5 8V4l3-3h8v2.5h6V8M1.5 12v4l3 3h8v-2.5h6V12" /><path d="M0 10h20" stroke="#f08a3c" strokeDasharray="6 1.5 3 1.5" /></svg></button>
                </OptionRow>
                <OptionRow as="div"><span>Look At</span><button aria-label="Look At"><LookAt /></button></OptionRow>
                {checks.map(([t, on]) => <OptionRow key={t}><span>{t}</span><Check type="checkbox" defaultChecked={on} /></OptionRow>)}
              </Options>
              <DialogFoot><FlatButton $w={103}>Finish Sketch</FlatButton></DialogFoot>
            </Dialog>

            <Hint role="tooltip">Select a line</Hint>
            <ViewNav>
              <button aria-label="Orbit"><svg width={20} height={20} fill="none" stroke="#444" strokeWidth={1.5}><path d="M9.5 19V5H7l3.5-4L14 5h-2.500v14zM14 8c7 1 6 5-1 6H5M8 8C1 8 0 10 2 12" /><path d="M1 14l5-4v8z" fill="#222" stroke="none" /></svg></button>
              <NavGap $w={7} /><Caret /><NavGap $w={7} />
              <button aria-label="Look At"><LookAt /></button><NavGap $w={11} />
              <button aria-label="Pan"><svg width={21} height={20} viewBox="0 0 21 20" fill="#fafafa" stroke="#4a4a4a" strokeWidth={1.3}><path d="M7 19c-1-4-5-6-6-9 1-1 3 0 4 2L4 4c1-2 2-1 3 1l1 4V2c1-2 2.500-1 2.500 0l.5 7 1-7c1-2 2.500-1 2.500 0l-.5 8 2-5c1-1.500 2.500-1 2 1-1 6-2 9-3 13z" /></svg></button><NavGap $w={11} />
              <button aria-label="Zoom"><svg width={20} height={20} fill="none" stroke="#444"><circle cx={6.5} cy={9} r={5.5} fill="#dfeaf0" strokeWidth={1.5} /><path d="M10.5 13l6 5" strokeWidth={3} /><path d="M14 4h6M17 1v6M14 9h6" strokeWidth={1.3} /></svg></button><NavGap $w={12} />
              <button aria-label="Fit"><svg width={21} height={20} fill="none" stroke="#444"><path d="M1 1h19v18H1z" strokeDasharray="3 2" stroke="#777" /><circle cx={10} cy={8} r={7} fill="#dfeaea" strokeWidth={1.5} /><path d="M15 13l5 6" strokeWidth={3} /></svg></button>
              <NavGap $w={6} /><Caret /><NavGap $w={7} />
              <button aria-label="Display"><svg width={20} height={20} fill="none" stroke="#4a5263" strokeWidth={1.3}><path d="M.7.7h18.6v14H.7zM7 15v2.5H5v2h10v-2h-2V15" fill="#f4f4f4" /><path d="M3.5 3.5h13v8.500h-13z" fill="#a9c3ea" /></svg></button>
              <NavGap $w={2} /><Caret /><NavGap $w={9} />
              <button aria-label="Grid"><svg width={20} height={20} fill="none" stroke="#555" strokeWidth={1.2}><path d="M.6.6h18.8v18.8H.6z" fill="#eceef2" strokeWidth={1.5} /><path d="M4.5 0v20M8.2 0v20M12 0v20M15.7 0v20M0 4.5h20M0 8.2h20M0 12h20M0 15.7h20" stroke="#777c86" /></svg></button>
              <NavGap $w={3} /><Caret /><NavGap $w={8} />
              <button aria-label="Viewports"><svg width={20} height={17} fill="#9db6de" stroke="#465a80"><path d="M.5.5h9v7.500h-9zM10.500.5h9v7.500h-9zM.5 9h9v7.500h-9zM10.500 9h9v7.500h-9z" /><path d="M3 3h4v2.500H3zM13 3h4v2.500h-4zM3 11.500h4V14H3zM13 11.500h4V14h-4z" fill="#b7caea" stroke="#cfdcf2" /></svg></button>
              <NavGap $w={4} /><Caret />
            </ViewNav>
            <Status>Multiple selections</Status>
            <Ink />
          </Canvas>

          <Timeline>
            <Play d="M1 1h2.5v18H1zM17 2v16L4 10z" />
            <Play d="M14 2v16L1 10zM15 5h3v10h-3z" w={20} />
            <Play d="M2 0l15 10L2 20z" />
            <Play d="M0 5h2.5v10H0zM4 2l13 8L4 18z" w={20} />
            <Play d="M1 2l13 8L1 18zM14 1h2.5v18H14z" />
            <Feature aria-label="Sketch1">
              <svg width={34} height={42} fill="none"><path d="M3 10h15M3 10v16M18 10v8M3 26h10" stroke="#666" strokeWidth={1.3} /><path d="M1 8h3.5v3.500H1zM17 8h3.500v3.500H17zM1 24h3.500v3.500H1z" fill={blue} /><path d="M13 26l6-6" stroke="#f5b942" strokeWidth={4} /><circle cx={19.5} cy={19.5} r={2} fill="#ee5555" /><path d="M11.5 32v8" stroke="#ccc" strokeWidth={2.5} /><path d="M18 1h15v5l-5 5v30h-3V11l-7-5z" fill="#5f5f5f" /></svg>
            </Feature>
            <button aria-label="Timeline settings"><Gear c="#999" hole={3} /></button>
          </Timeline>
        </Workspace>
      </Body>

      <Taskbar>
        <Start aria-label="Start"><svg width={20} height={20}><path d="M0 2.7l8-1.200V9.5H0zM9 1.300L20 0v9.5H9zM0 10.5h8v8L0 17.300zM9 10.5h11V20L9 18.700z" fill="#000" /></svg></Start>
        <Search>
          <svg width={21} height={20} fill="none" stroke="#111" strokeWidth={1.5}><circle cx={13} cy={7.5} r={6.5} /><path d="M8.5 12L1 19.5" /></svg>
          <input type="text" placeholder="Type here to search" aria-label="Search" />
        </Search>
        <TaskItem $w={60} aria-label="Cortana"><svg width={20} height={20}><circle cx={10} cy={10} r={8.5} fill="none" stroke="#000" strokeWidth={2.5} /></svg></TaskItem>
        <TaskItem $w={60} aria-label="Task view"><svg width={20} height={19} fill="none" stroke="#000" strokeWidth={1.2}><path d="M.6 0v3h12V0M.6 6h12v7H.6zM.6 19v-3h12v3M18 0v4M18 10v9" /><path d="M16.5 5.5h3v3h-3z" fill="#000" stroke="none" /></svg></TaskItem>
        <TaskItem $first $line={teal} aria-label="Chrome"><svg width={28} height={28} viewBox="0 0 28 28"><circle cx={14} cy={14} r={14} fill="#ffcd40" /><path d="M14 14L2 7a14 14 0 0 1 24.200 0z" fill="#db4437" /><path d="M14 7h12.200A14 14 0 0 0 2 7l6 10z" fill="#db4437" /><path d="M2 7a14 14 0 0 0 11 21l6.500-10-5.500 2.500-6-3.500z" fill="#0f9d58" /><circle cx={14} cy={14} r={6.5} fill="#f1f1f1" /><circle cx={14} cy={14} r={5.3} fill="#4285f4" /></svg></TaskItem>
        <TaskItem $tone="linear-gradient(90deg,#f9ad7b 0 56px,#ef9a66 56px 57px,#f9a873 57px)" $line="#ff7300" $full aria-label="Sticky Notes"><svg width={26} height={26}><path d="M0 0h26v13L13 26H0z" fill="#3f3f3f" /><path d="M13 13h13L13 26z" fill="#ffdd00" /></svg></TaskItem>
        <TaskItem $line={teal} aria-label="File Explorer"><svg width={28} height={24}><path d="M0 1h11l3 3-2 3H0z" fill="#dd9a10" /><path d="M0 5h11l2-3h15v20H0z" fill="#ffd45e" /><path d="M5 24V13h18v11h-5v-5h-8v5z" fill="#3796e0" /></svg></TaskItem>
        <TaskItem $line={teal} aria-label="Movies"><svg width={30} height={29}><defs><linearGradient id="mv" x2="1" y2="1"><stop stopColor="#2aa7ea" /><stop offset="1" stopColor="#0a4fb5" /></linearGradient></defs><path d="M0 9h30v18q0 2-2 2H2q-2 0-2-2z" fill="url(#mv)" /><path d="M0 3L30 0v5L0 9z" fill="#0f6cc9" /><path d="M7 2.300l4-.4-3 6-4 .4zM16 1.500l4-.4-3 5.700-4 .4zM25 .5l4-.4-2 5.300-4 .4z" fill="#45d4f7" /><path d="M11 12l11 6.500L11 25z" fill="#fff" /></svg></TaskItem>
        <TaskItem $line={teal} aria-label="Teams"><svg width={32} height={30}><circle cx={16} cy={6} r={5} fill="#7b83eb" /><circle cx={25} cy={7} r={3.5} fill="#5059c9" /><path d="M18 12h12v9c0 6-7 7-9 4z" fill="#5059c9" /><path d="M8 12h16v10c0 8-14 8-16 0z" fill="#7b83eb" /><path d="M0 8h16v15H0z" fill="#4b53bc" /><path d="M4 11.500h8M8 11.500V20" stroke="#fff" strokeWidth={2} /><circle cx={25} cy={24} r={6} fill="#6bb700" stroke="#eee" /><path d="M22 24l2.500 2.500 4-4.500" stroke="#fff" strokeWidth={1.8} fill="none" /></svg></TaskItem>
        <TaskItem $tone="#f7eff3" $line={teal} $full aria-label="Fusion 360"><FusionLogo s={30} label /></TaskItem>
        <TaskItem $line={teal} aria-label="Notepad"><svg width={28} height={27}><path d="M10 2l17 1 1 20-7 3z" fill="#8a6f4c" /><path d="M10 2l14 1 2 21-5 2z" fill="#eef6f7" /><path d="M10 2l15 1-7 21-18-4z" fill="#6db6c7" /><path d="M10 2l15 1-4 10c-6-3-9 3-16 0z" fill="#a8dbe4" /></svg></TaskItem>
        <TaskItem $line={`linear-gradient(90deg,${teal} 0 41px,#6ad3d8 41px)`} aria-label="Photos"><svg width={28} height={28}><path d="M0 0h28v28H0z" fill="#27a4ec" /><path d="M28 5v23H16z" fill="#6a83e2" /><path d="M17 17l4-4 7 7v8H12z" fill="#3350b0" /><path d="M0 19l8-9 18 18H0z" fill="#153f85" /><circle cx={19} cy={6.5} r={2.8} fill="#fff" /></svg></TaskItem>
        <TaskItem $line={teal} aria-label="Snip & Sketch"><svg width={28} height={29} fill="none"><ellipse cx={10} cy={16} rx={10} ry={5} transform="rotate(-10 10 16)" stroke="#e99" /><ellipse cx={14} cy={8} rx={12} ry={7} transform="rotate(-15 14 8)" fill="#fdf4f4" stroke="#e5373b" strokeWidth={1.5} /><path d="M5 8l13 7M13 3l4 13" stroke="#888" strokeWidth={2} /><ellipse cx={23} cy={18} rx={5} ry={3} stroke="#1f8ac9" strokeWidth={2} /><ellipse cx={17} cy={23} rx={3} ry={5} stroke="#1f8ac9" strokeWidth={2} /></svg></TaskItem>
        <TaskItem $line={teal} aria-label="Snipping Tool"><svg width={28} height={30} fill="none"><path d="M4 3c6-3 15-1 18 6 2 7-2 11-6 13" stroke="#d83b01" strokeWidth={5} /><path d="M5 9c0 5 2 9 6 11" stroke="#d83b01" strokeWidth={2} /><path d="M13 1l3 1v18h-4zM21 9l-7 12-3-2z" fill="#b5b5b5" /><circle cx={5} cy={22} r={3.5} stroke="#0a5cad" strokeWidth={3} /><circle cx={16} cy={26} r={3} stroke="#1f9de0" strokeWidth={3} /></svg></TaskItem>
        <Tray>
          <button aria-label="Show hidden icons"><svg width={18} height={10} fill="none" stroke="#111" strokeWidth={1.3}><path d="M1 9l8-8 8 8" /></svg></button>
          <button aria-label="Volume"><svg width={22} height={18} fill="none" stroke="#111" strokeWidth={1.2}><path d="M1 6h3l4-4v14l-4-4H1zM11 7q1.500 2 0 4M14 4q4 5 0 10M17 2q6 7 0 14" /></svg></button>
          <button aria-label="Battery"><svg width={20} height={14} fill="none" stroke="#111"><path d="M5 3h13v9H2V7M1 0v3M4 0v3M0 3h5v3l-2 2-2-2zM18.500 5v4" /><path d="M6 4h11v7H4z" fill="#111" /></svg></button>
          <button aria-label="Network"><svg width={21} height={17} fill="none" stroke="#111" strokeWidth={1.2}><path d="M5 1h15v11H3V6M10 12v4M7 16h7M.6.6h4v4h-4z" /></svg></button>
          <Lang>ESP</Lang>
          <Clock>12:37 PM<br />4/7/2021</Clock>
          <button aria-label="Notifications, 2 new"><svg width={32} height={34} viewBox="0 0 32 34"><path d="M1 4h20v16h-8l-5 5v-5H1z" fill="#000" /><path d="M4 8h14M4 12h14M4 16h8" stroke="#e8d2d2" strokeWidth={1.3} /><circle cx={21} cy={23} r={10} fill="#cfc9c9" stroke="#777" /><text x={21} y={28} textAnchor="middle" fontSize={14} fontFamily="Open Sans" fontWeight={600} fill="#111">2</text></svg></button>
        </Tray>
      </Taskbar>
    </Screen>
  );
}
